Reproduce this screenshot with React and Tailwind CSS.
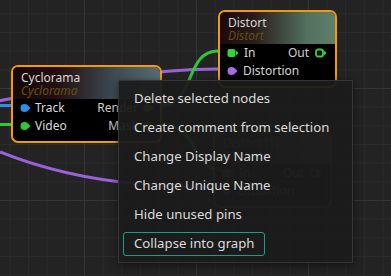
import React from "react";

const font = { fontFamily: '"Noto Sans", "Open Sans", sans-serif' };

function CirclePin({ color }) {
  return (
    <svg width="11" height="10" viewBox="0 0 11 10" className="shrink-0">
      <circle cx="4.5" cy="5" r="4" fill={color} />
      <path d="M8 2.5 L10.5 5 L8 7.5 Z" fill={color} />
    </svg>
  );
}

function SquarePin({ color, hollow }) {
  return (
    <svg width="12" height="10" viewBox="0 0 12 10" className="shrink-0">
      {hollow ? (
        <rect x="1" y="1.5" width="7" height="7" rx="2" fill="none" stroke={color} strokeWidth="1.8" />
      ) : (
        <rect x="0.5" y="1" width="8" height="8" rx="2" fill={color} />
      )}
      <path d="M9 2.5 L11.5 5 L9 7.5 Z" fill={color} />
    </svg>
  );
}

function NodeHeader({ title, sub, tint }) {
  return (
    <div className={`h-[32px] rounded-t-[5px] px-[8px] pt-[4px] leading-[13px] text-[12px] ${tint}`}>
      <div className="text-[#d6d6d6]">{title}</div>
      <div className="italic text-[#625210]">{sub}</div>
    </div>
  );
}

function DistortNode({ className, title }) {
  return (
    <div className={`absolute w-[119px] h-[78px] rounded-[7px] border-2 border-[#f29a0c] bg-black ${className}`}>
      <NodeHeader
        title={title}
        sub="Distort"
        tint="bg-[linear-gradient(to_right,#1c0a0b_0%,#2a1c1c_30%,#51705e_75%,#5e806b_100%)]"
      />
      <div className="flex flex-col text-[12px] text-[#d8d8d8]">
        <div className="h-[18px] flex items-center pl-[7px] pr-[8px]">
          <SquarePin color="#34d33a" />
          <span className="ml-[5px]">In</span>
          <span className="ml-auto mr-[6px] text-[#cfcfcf]">Out</span>
          <SquarePin color="#34d33a" hollow />
        </div>
        <div className="h-[18px] flex items-center pl-[7px]">
          <CirclePin color="#a36ee6" />
          <span className="ml-[5px]">Distortion</span>
        </div>
      </div>
    </div>
  );
}

const menuItems = [
  "Delete selected nodes",
  "Create comment from selection",
  "Change Display Name",
  "Change Unique Name",
  "Hide unused pins",
  "Collapse into graph",
];

export default function App() {
  return (
    <div
      style={font}
      className="relative w-[391px] h-[276px] overflow-hidden bg-[#232323] bg-[linear-gradient(to_right,#363636_1px,transparent_1px),linear-gradient(to_bottom,#363636_1px,transparent_1px),linear-gradient(to_right,#2b2b2b_1px,transparent_1px),linear-gradient(to_bottom,#2b2b2b_1px,transparent_1px)] bg-[size:112px_112px,112px_112px,18.667px_18.667px,18.667px_18.667px] bg-[position:84px_88px]"
    >
      {/* wires */}
      <svg width="391" height="276" className="absolute inset-0" fill="none">
        <path d="M -20 104 C 60 92, 110 70, 218 69" stroke="#9b62d8" strokeWidth="3" />
        <path d="M 0 105.5 L 22 105.5" stroke="#2c8ee8" strokeWidth="3" />
        <path d="M 0 124.5 L 22 124.5" stroke="#2fc63a" strokeWidth="3" />
        <path d="M 0 152 C 45 170, 90 180, 140 184 C 180 187, 200 188, 220 188" stroke="#9b62d8" strokeWidth="3" />
        <path d="M 160 106 C 196 106, 184 51, 218 51" stroke="#2fc63a" strokeWidth="3" />
        <path d="M 160 124 C 200 124, 190 170, 222 170" stroke="#2fc63a" strokeWidth="3" />
      </svg>

      {/* ghost copy under the menu */}
      <DistortNode className="left-[213px] top-[130px] opacity-50" title="Distort (1)" />

      {/* Cyclorama */}
      <div className="absolute left-[11px] top-[65px] w-[151px] h-[78px] rounded-[7px] border-2 border-[#f29a0c] bg-black">
        <NodeHeader
          title="Cyclorama"
          sub="Cyclorama"
          tint="bg-[linear-gradient(to_right,#140809_0%,#240e12_30%,#3e4c55_70%,#5a6b74_100%)]"
        />
        <div className="flex flex-col text-[12px] text-[#d8d8d8]">
          <div className="h-[18px] flex items-center pl-[7px] pr-[6px]">
            <CirclePin color="#2c8ee8" />
            <span className="ml-[4px]">Track</span>
            <span className="ml-auto mr-[5px] text-[#cfcfcf]">Render</span>
            <CirclePin color="#2fc63a" />
          </div>
          <div className="h-[18px] flex items-center pl-[7px] pr-[6px]">
            <CirclePin color="#2fc63a" />
            <span className="ml-[4px]">Video</span>
            <span className="ml-auto mr-[5px] text-[#cfcfcf]">Mask</span>
            <CirclePin color="#2fc63a" />
          </div>
        </div>
      </div>

      {/* Distort */}
      <DistortNode className="left-[218px] top-[10px]" title="Distort" />

      {/* context menu */}
      <div className="absolute left-[118px] top-[80px] w-[235px] h-[183px] border border-[#353535] bg-[#1b1b1b]/[0.95] shadow-[0_2px_8px_rgba(0,0,0,0.5)] px-[4px] py-[6px] flex flex-col gap-[5px]">
        {menuItems.map((item, i) => (
          <div
            key={item}
            className={`self-start h-[24px] flex items-center px-[10px] rounded-[3px] border text-[13.2px] text-[#dcdcdc] whitespace-nowrap ${
              i === menuItems.length - 1 ? "border-[#17a084]" : "border-transparent"
            }`}
          >
            {item}
          </div>
        ))}
      </div>
    </div>
  );
}
